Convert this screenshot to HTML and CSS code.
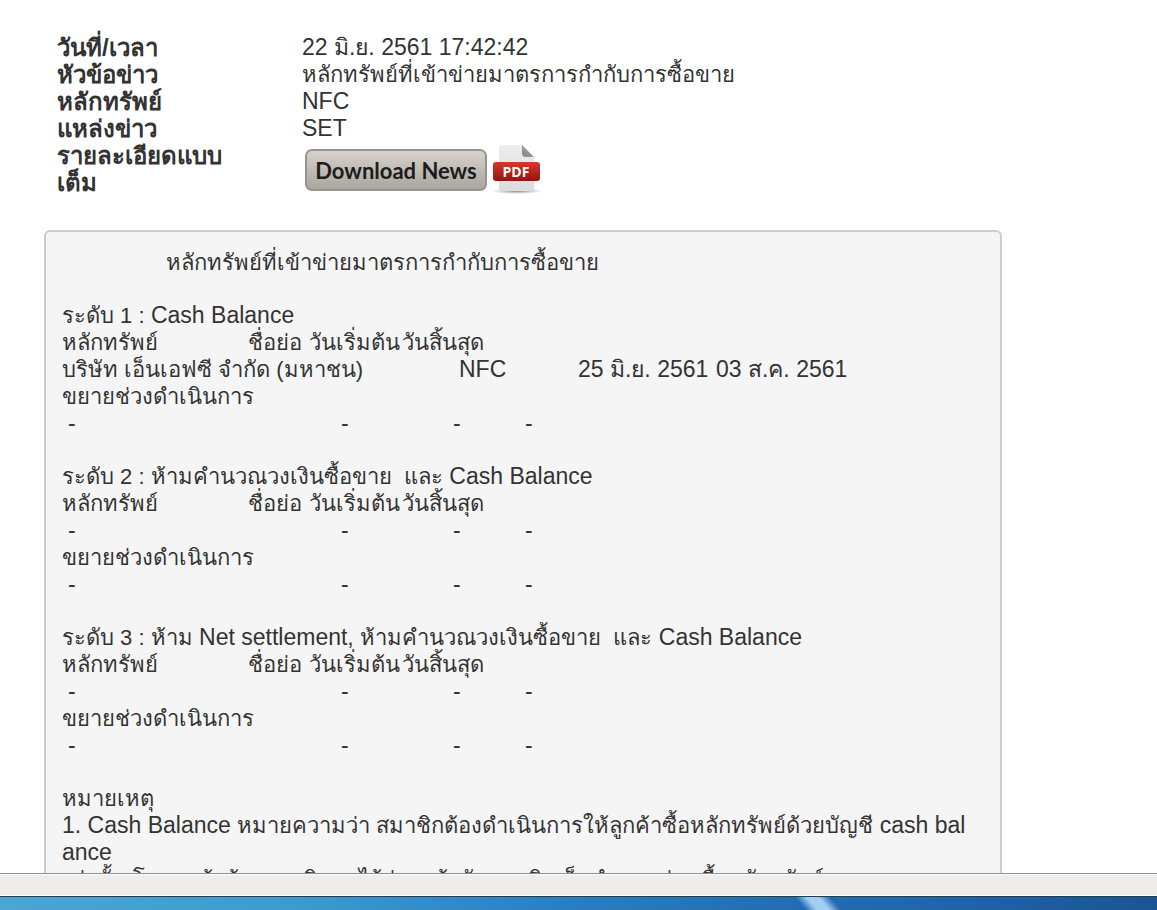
FILE: index.html
```html
<!DOCTYPE html>
<html lang="th">
<head>
    <meta charset="UTF-8">
    <meta name="viewport" content="width=device-width, initial-scale=1.0">
    <title>หลักทรัพย์ที่เข้าข่ายมาตรการกำกับการซื้อขาย</title>
    <link rel="stylesheet" href="styles.css">
</head>
<body>

<main class="page">
    <dl class="news-info">
        <dt>วันที่/เวลา</dt>
        <dd>22 มิ.ย. 2561 17:42:42</dd>
        <dt>หัวข้อข่าว</dt>
        <dd class="thai">หลักทรัพย์ที่เข้าข่ายมาตรการกำกับการซื้อขาย</dd>
        <dt>หลักทรัพย์</dt>
        <dd>NFC</dd>
        <dt>แหล่งข่าว</dt>
        <dd>SET</dd>
        <dt>รายละเอียดแบบ<br>เต็ม</dt>
        <dd class="download">
            <button class="download-button" type="button">Download News</button>
            <a class="pdf-link" href="#" aria-label="PDF">
                <svg width="52" height="50" viewBox="0 0 52 50">
                    <defs>
                        <linearGradient id="paper" x1="0" y1="0" x2="0" y2="1">
                            <stop offset="0" stop-color="#ededed"/>
                            <stop offset="1" stop-color="#dcdcdc"/>
                        </linearGradient>
                        <linearGradient id="fold" x1="0" y1="1" x2="1" y2="0">
                            <stop offset="0" stop-color="#808080"/>
                            <stop offset="1" stop-color="#b4b4b4"/>
                        </linearGradient>
                        <linearGradient id="red" x1="0" y1="0" x2="0" y2="1">
                            <stop offset="0" stop-color="#d5392c"/>
                            <stop offset="1" stop-color="#96150f"/>
                        </linearGradient>
                        <radialGradient id="shadow">
                            <stop offset="0" stop-color="#8c8c8c"/>
                            <stop offset="1" stop-color="#ffffff"/>
                        </radialGradient>
                    </defs>
                    <ellipse cx="26" cy="46" rx="25" ry="3" fill="url(#shadow)"/>
                    <path d="M11 0h20l12 12v31q0 3-3 3H11q-3 0-3-3V3q0-3 3-3z" fill="url(#paper)"/>
                    <path d="M31 0l12 12h-8q-4 0-4-4z" fill="url(#fold)"/>
                    <rect x="2" y="17" width="47" height="19" rx="3" fill="url(#red)"/>
                    <text class="pdf-text" x="25" y="32" text-anchor="middle">PDF</text>
                </svg>
            </a>
        </dd>
    </dl>

    <article class="news-box">
        <h1 class="title">หลักทรัพย์ที่เข้าข่ายมาตรการกำกับการซื้อขาย</h1>

        <section class="level">
            <p><span class="thai">ระดับ 1 :</span> Cash Balance</p>
            <div class="row head"><span>หลักทรัพย์</span><span>ชื่อย่อ</span><span>วันเริ่มต้น</span><span>วันสิ้นสุด</span></div>
            <div class="row stock"><span class="thai">บริษัท เอ็นเอฟซี จำกัด (มหาชน)</span><span>NFC</span><span>25 มิ.ย. 2561</span><span>03 ส.ค. 2561</span></div>
            <p class="thai">ขยายช่วงดำเนินการ</p>
            <div class="row empty"><span>-</span><span>-</span><span>-</span><span>-</span></div>
        </section>

        <section class="level">
            <p><span class="thai">ระดับ 2 : ห้ามคำนวณวงเงินซื้อขาย&nbsp; และ</span> Cash Balance</p>
            <div class="row head"><span>หลักทรัพย์</span><span>ชื่อย่อ</span><span>วันเริ่มต้น</span><span>วันสิ้นสุด</span></div>
            <div class="row empty"><span>-</span><span>-</span><span>-</span><span>-</span></div>
            <p class="thai">ขยายช่วงดำเนินการ</p>
            <div class="row empty"><span>-</span><span>-</span><span>-</span><span>-</span></div>
        </section>

        <section class="level">
            <p><span class="thai">ระดับ 3 : ห้าม</span> Net settlement, <span class="thai">ห้ามคำนวณวงเงินซื้อขาย&nbsp; และ</span> Cash Balance</p>
            <div class="row head"><span>หลักทรัพย์</span><span>ชื่อย่อ</span><span>วันเริ่มต้น</span><span>วันสิ้นสุด</span></div>
            <div class="row empty"><span>-</span><span>-</span><span>-</span><span>-</span></div>
            <p class="thai">ขยายช่วงดำเนินการ</p>
            <div class="row empty"><span>-</span><span>-</span><span>-</span><span>-</span></div>
        </section>

        <section class="level">
            <p class="thai">หมายเหตุ</p>
            <p>1. Cash Balance <span class="thai">หมายความว่า สมาชิกต้องดำเนินการให้ลูกค้าซื้อหลักทรัพย์ด้วยบัญชี</span> cash bal<br>ance</p>
            <p class="thai">เท่านั้น โดยลูกค้าต้องวางเงินสดไว้ล่วงหน้ากับสมาชิกเต็มจำนวนก่อนซื้อหลักทรัพย์</p>
        </section>
    </article>
</main>

<div class="status-bar"></div>
<div class="taskbar"></div>

</body>
</html>
```
FILE: styles.css
```css
* {
    box-sizing: border-box;
    margin: 0;
    padding: 0;
}

body {
    display: flex;
    flex-direction: column;
    height: 100vh;
    overflow: hidden;
    background: #fff;
    color: #333;
    font-family: "Liberation Sans", Arial, sans-serif;
    font-size: 23px;
    line-height: 27px;
    white-space: nowrap;
}

.page {
    flex: 1;
    min-height: 0;
    overflow: hidden;
    padding: 34px 155px 0 44px;
}

.thai {
    font-size: 22px;
}

.news-info {
    display: grid;
    grid-template-columns: 245px 1fr;
    padding-left: 13px;
}

.news-info dt {
    font-size: 24px;
    font-weight: bold;
}

.download {
    display: flex;
    align-items: center;
    gap: 4px;
    height: 54px;
    padding: 2px 0 0 3px;
}

.download-button {
    width: 182px;
    height: 42px;
    border: 2px solid #97948f;
    border-radius: 7px;
    background: linear-gradient(#d6d3cc, #aaa59d);
    color: #1c1c1c;
    font-family: Lato, sans-serif;
    font-size: 22px;
    font-weight: bold;
}

.pdf-link svg {
    display: block;
}

.pdf-text {
    fill: #fff;
    font-family: "Open Sans", sans-serif;
    font-size: 14px;
    font-weight: bold;
}

.news-box {
    margin-top: 34px;
    padding: 17px 16px;
    border: 2px solid #ccc;
    border-radius: 6px;
    background: #f5f5f5;
}

.title {
    padding-left: 104px;
    font-size: 22px;
    font-weight: normal;
}

.level {
    margin-top: 26px;
}

.row {
    display: grid;
}

.head {
    grid-template-columns: 186px 61px 93px 1fr;
    font-size: 22px;
}

.stock {
    grid-template-columns: 397px 119px 138px 1fr;
}

.empty {
    grid-template-columns: 273px 112px 72px 1fr;
    padding-left: 6px;
}

.status-bar {
    height: 23px;
    border-top: 1px solid #8f8f8f;
    border-bottom: 1px solid #fff;
    background: #f0ecea;
    box-shadow: inset 0 1px #fff;
}

.taskbar {
    height: 14px;
    border-top: 1px solid #1d3c56;
    background: linear-gradient(50deg, transparent 69%, #a4cdf5 70%, #a4cdf5 71%, transparent 72%),
        linear-gradient(90deg, #4ba6d6, #3d9bd0 25%, #2b83c8 45%, #2474b8 60%, #1f66ae 80%, #1b5496);
}
```
